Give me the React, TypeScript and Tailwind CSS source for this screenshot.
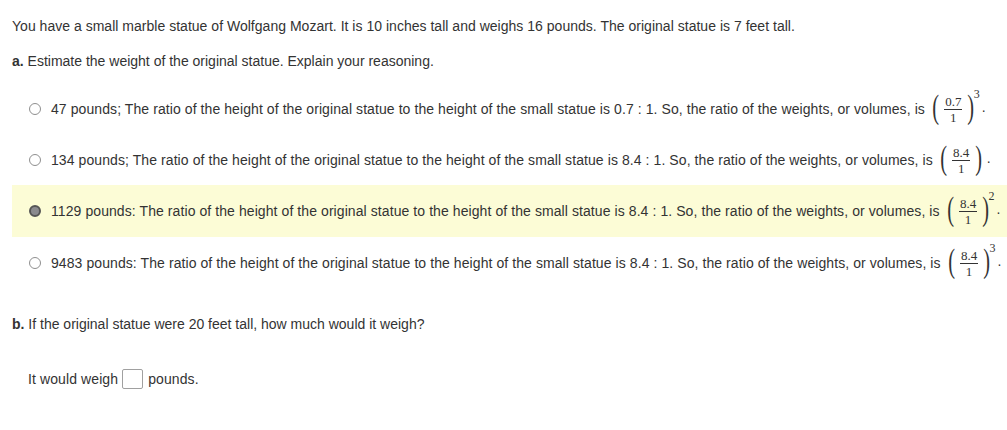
import React from 'react';

interface Option {
  weight: string;
  sep: string;
  ratio: string;
  exp?: string;
  selected?: boolean;
  height: string;
}

const options: Option[] = [
  { weight: '47', sep: ';', ratio: '0.7', exp: '3', height: 'h-[52px]' },
  { weight: '134', sep: ';', ratio: '8.4', height: 'h-[50px]' },
  { weight: '1129', sep: ':', ratio: '8.4', exp: '2', selected: true, height: 'h-[52px]' },
  { weight: '9483', sep: ':', ratio: '8.4', exp: '3', height: 'h-[52px]' },
];

// small fraction raised to a power, like the rendered math in the source
function Ratio({ num, exp }: { num: string; exp?: string }) {
  return (
    <span className="inline-flex items-center ml-[5px] font-['Liberation_Serif',serif] text-[#333]">
      <span className="text-[34px] leading-none scale-x-[0.6] -mt-[4px]">(</span>
      <span className="inline-flex flex-col items-center mx-[3px] text-[13px] leading-[13px]">
        <span className="px-[1px] pb-[1px] border-b border-[#333]">{num}</span>
        <span className="pt-[1px]">1</span>
      </span>
      <span className="text-[34px] leading-none scale-x-[0.6] -mt-[4px]">)</span>
      {exp ? (
        <span className="self-start text-[12px] leading-none -mt-[6px] -ml-[3px]">{exp}</span>
      ) : null}
      <span className="ml-[2px] text-[14px] self-end mb-[6px] font-['Liberation_Sans',sans-serif]">.</span>
    </span>
  );
}

function Radio({ selected }: { selected?: boolean }) {
  if (selected) {
    return (
      <span className="w-[12px] h-[12px] rounded-full bg-[#8a8a8e] border-2 border-[#555] shrink-0" />
    );
  }
  return <span className="w-[12px] h-[12px] rounded-full bg-white border border-[#8f8f8f] shrink-0" />;
}

export default function App() {
  return (
    <div className="w-[1007px] h-[430px] bg-white pt-[16px] pl-[12px] font-['Liberation_Sans',Arial,sans-serif] text-[14px] text-[#333]">
      <p className="leading-5 tracking-[0.02px]">
        You have a small marble statue of Wolfgang Mozart. It is 10 inches tall and weighs 16 pounds. The original statue is 7 feet tall.
      </p>
      <p className="leading-5 mt-[15px]">
        <b>a.</b> Estimate the weight of the original statue. Explain your reasoning.
      </p>

      <div className="mt-[12px] flex flex-col">
        {options.map((o) => (
          <div
            key={o.weight}
            className={`flex items-center pl-[17px] ${o.height} ${o.selected ? 'bg-[#fcfcd6]' : ''}`}
          >
            <Radio selected={o.selected} />
            <span className="ml-[10px] whitespace-nowrap tracking-[0.08px]">
              {o.weight} pounds{o.sep} The ratio of the height of the original statue to the height of the small statue is {o.ratio} : 1. So, the ratio of the weights, or volumes, is
            </span>
            <Ratio num={o.ratio} exp={o.exp} />
          </div>
        ))}
      </div>

      <p className="leading-5 mt-[25px]">
        <b>b.</b> If the original statue were 20 feet tall, how much would it weigh?
      </p>

      <div className="mt-[35px] pl-[16px] flex items-center leading-5 tracking-[0.1px]">
        <span>It would weigh</span>
        <span className="inline-block w-[21px] h-[20px] ml-[4px] mr-[5px] border border-[#a0a0a0] rounded-[2px] bg-white" />
        <span>pounds.</span>
      </div>
    </div>
  );
}
